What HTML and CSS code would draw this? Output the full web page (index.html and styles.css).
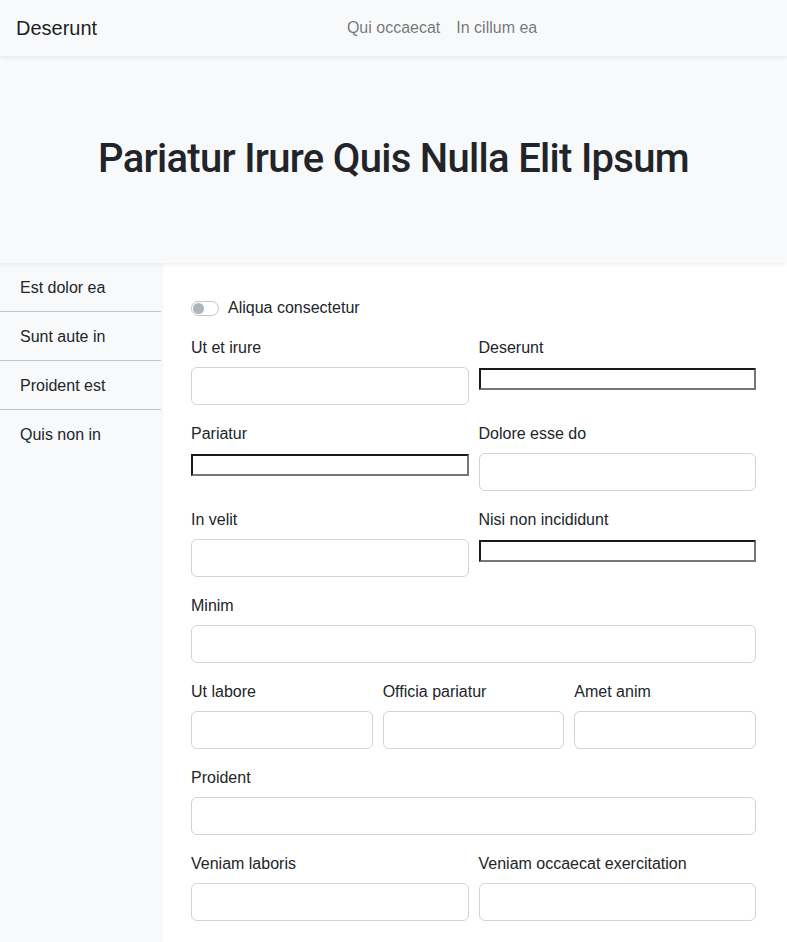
FILE: index.html
```html
<!DOCTYPE html>
<html lang="en">
<head>
<meta charset="utf-8">
<title>Deserunt</title>
<link rel="stylesheet" href="styles.css">
</head>
<body>
<nav class="navbar">
  <a class="brand" href="#">Deserunt</a>
  <div class="nav-links">
    <a href="#">Qui occaecat</a>
    <a href="#">In cillum ea</a>
  </div>
</nav>
<header class="hero">
  <h1>Pariatur Irure Quis Nulla Elit Ipsum</h1>
</header>
<div class="layout">
  <aside class="sidebar">
    <a class="side-item" href="#">Est dolor ea</a>
    <a class="side-item" href="#">Sunt aute in</a>
    <a class="side-item" href="#">Proident est</a>
    <a class="side-item" href="#">Quis non in</a>
  </aside>
  <main class="main">
    <form class="form">
      <div class="switch-row">
        <span class="switch"><span class="knob"></span></span>
        <label class="switch-label">Aliqua consectetur</label>
      </div>
      <div class="row cols-2">
        <div class="field"><label class="label">Ut et irure</label><input class="control" type="text"></div>
        <div class="field"><label class="label">Deserunt</label><input class="raw" type="text"></div>
      </div>
      <div class="row cols-2">
        <div class="field"><label class="label">Pariatur</label><input class="raw" type="text"></div>
        <div class="field"><label class="label">Dolore esse do</label><input class="control" type="text"></div>
      </div>
      <div class="row cols-2">
        <div class="field"><label class="label">In velit</label><input class="control" type="text"></div>
        <div class="field"><label class="label">Nisi non incididunt</label><input class="raw" type="text"></div>
      </div>
      <div class="row cols-1">
        <div class="field"><label class="label">Minim</label><input class="control" type="text"></div>
      </div>
      <div class="row cols-3">
        <div class="field"><label class="label">Ut labore</label><input class="control" type="text"></div>
        <div class="field"><label class="label">Officia pariatur</label><input class="control" type="text"></div>
        <div class="field"><label class="label">Amet anim</label><input class="control" type="text"></div>
      </div>
      <div class="row cols-1">
        <div class="field"><label class="label">Proident</label><input class="control" type="text"></div>
      </div>
      <div class="row cols-2">
        <div class="field"><label class="label">Veniam laboris</label><input class="control" type="text"></div>
        <div class="field"><label class="label">Veniam occaecat exercitation</label><input class="control" type="text"></div>
      </div>
    </form>
  </main>
</div>
</body>
</html>
```
FILE: styles.css
```css
* { box-sizing: border-box; }
html, body { margin: 0; padding: 0; }
body {
  font-family: "Liberation Sans", Arial, sans-serif;
  font-size: 16px;
  line-height: 1.5;
  color: #212529;
  background: #fff;
  min-height: 942px;
}
a { text-decoration: none; }

.navbar {
  height: 56px;
  background: #f8f9fa;
  display: flex;
  align-items: center;
  padding: 0 16px;
  box-shadow: 0 2px 4px rgba(0,0,0,0.07);
  position: relative;
  z-index: 3;
}
.brand {
  font-size: 20px;
  color: rgba(0,0,0,0.9);
  margin-right: 16px;
}
.nav-links {
  flex: 1;
  display: flex;
  justify-content: center;
  gap: 16px;
}
.nav-links a { color: rgba(0,0,0,0.55); font-size: 16px; }

.hero {
  height: 207px;
  background: #f8f9fa;
  display: flex;
  align-items: center;
  justify-content: center;
  padding-bottom: 2px;
  box-shadow: 0 2px 4px rgba(0,0,0,0.06);
  position: relative;
  z-index: 2;
}
.hero h1 {
  margin: 0;
  font-family: Roboto, "Liberation Sans", sans-serif;
  font-size: 40px;
  font-weight: 500;
  letter-spacing: -0.7px;
  line-height: 1.2;
  color: #212529;
}

.layout {
  display: flex;
  min-height: 679px;
}
.sidebar {
  width: 161px;
  flex: none;
  background: #f8f9fa;
  display: flex;
  flex-direction: column;
  box-shadow: 1px 0 3px rgba(0,0,0,0.05);
  position: relative;
  z-index: 1;
}
.side-item {
  display: block;
  padding: 13px 20px 11px;
  line-height: 24px;
  color: #212529;
  border-bottom: 1px solid #c4c6c8;
}
.side-item:last-child { border-bottom: none; }

.main {
  flex: 1;
  padding: 32px 31px 20px 30px;
}
.switch-row {
  display: flex;
  align-items: center;
  gap: 9px;
  height: 24px;
  margin-top: 1px;
  margin-bottom: 15px;
}
.switch {
  width: 28px;
  height: 15px;
  border: 1px solid #c2c6cb;
  border-radius: 8px;
  background: #fff;
  display: flex;
  align-items: center;
  padding-left: 1px;
}
.knob {
  width: 11px;
  height: 11px;
  border-radius: 50%;
  background: #adb5bd;
}
.switch-label { color: #212529; }

.row {
  display: grid;
  column-gap: 10px;
  margin-bottom: 16px;
}
.cols-1 { grid-template-columns: 1fr; }
.cols-2 { grid-template-columns: 1fr 1fr; }
.cols-3 { grid-template-columns: 1fr 1fr 1fr; }
.field { display: flex; flex-direction: column; align-items: stretch; }
.label {
  display: block;
  padding-top: 1px;
  margin-bottom: 7px;
  line-height: 24px;
}
.control {
  display: block;
  width: 100%;
  height: 38px;
  padding: 6px 12px;
  font: inherit;
  border: 1px solid #ced4da;
  border-radius: 6px;
  background: #fff;
}
.raw {
  display: block;
  width: 100%;
  height: 22px;
  margin-top: 1px;
  padding: 1px 2px;
  border-width: 2px;
  border-style: solid;
  border-top-color: #1a1a1a;
  border-left-color: #1a1a1a;
  border-right-color: #767676;
  border-bottom-color: #767676;
  background: #fff;
  font-size: 13px;
}
```
